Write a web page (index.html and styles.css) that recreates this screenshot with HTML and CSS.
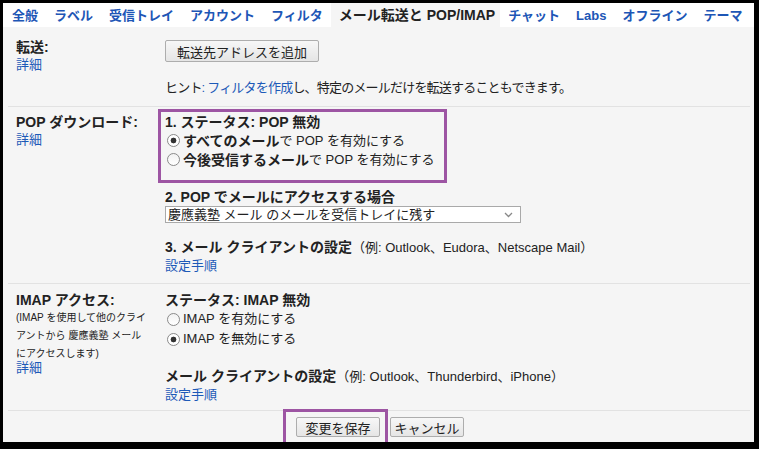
FILE: index.html
```html
<!DOCTYPE html>
<html lang="ja">
<head>
    <meta charset="utf-8">
    <title>設定 - メール転送と POP/IMAP</title>
    <link rel="stylesheet" href="styles.css">
</head>
<body>
<div class="frame">
    <!-- Settings tabs -->
    <div class="tabs">
        <a class="tab" href="#">全般</a>
        <a class="tab" href="#">ラベル</a>
        <a class="tab" href="#">受信トレイ</a>
        <a class="tab" href="#">アカウント</a>
        <a class="tab" href="#">フィルタ</a>
        <span class="tab active">メール転送と POP/IMAP</span>
        <a class="tab" href="#">チャット</a>
        <a class="tab" href="#">Labs</a>
        <a class="tab" href="#">オフライン</a>
        <a class="tab" href="#">テーマ</a>
    </div>

    <!-- Forwarding -->
    <div class="row row-forward">
        <div class="row-label">
            <div class="label">転送:</div>
            <a class="link" href="#">詳細</a>
        </div>
        <div class="row-body">
            <button type="button" class="btn btn-add">転送先アドレスを追加</button>
            <p class="hint">ヒント<span class="link">: </span><a class="link" href="#">フィルタを作成</a>し、特定のメールだけを転送することもできます。</p>
        </div>
    </div>

    <!-- POP download -->
    <div class="row row-pop">
        <div class="row-label">
            <div class="label">POP ダウンロード:</div>
            <a class="link" href="#">詳細</a>
        </div>
        <div class="row-body">
            <div class="mark mark-status">
                <div class="label">1. ステータス: POP 無効</div>
                <label class="option"><input type="radio" name="pop" checked><b>すべてのメール</b>で POP を有効にする</label>
                <label class="option"><input type="radio" name="pop"><b>今後受信するメール</b>で POP を有効にする</label>
            </div>
            <div class="label step">2. POP でメールにアクセスする場合</div>
            <div class="select">
                <span>慶應義塾 メール のメールを受信トレイに残す</span>
                <svg width="9" height="6" viewBox="0 0 9 6"><path d="M1 1l3.5 3.5L8 1" fill="none" stroke="#888" stroke-width="1.3"/></svg>
            </div>
            <div class="step-client"><b>3. メール クライアントの設定</b>（例: Outlook、Eudora、Netscape Mail）</div>
            <a class="link" href="#">設定手順</a>
        </div>
    </div>

    <!-- IMAP access -->
    <div class="row row-imap">
        <div class="row-label">
            <div class="label">IMAP アクセス:</div>
            <div class="note">(IMAP を使用して他のクライ<br>アントから 慶應義塾 メール<br>にアクセスします)</div>
            <a class="link link-tight" href="#">詳細</a>
        </div>
        <div class="row-body">
            <div class="label">ステータス: IMAP 無効</div>
            <label class="option option-wide"><input type="radio" name="imap">IMAP を有効にする</label>
            <label class="option option-wide"><input type="radio" name="imap" checked>IMAP を無効にする</label>
            <div class="step-client step-imap"><b>メール クライアントの設定</b>（例: Outlook、Thunderbird、iPhone）</div>
            <a class="link" href="#">設定手順</a>
        </div>
    </div>

    <!-- Save / cancel -->
    <div class="actions">
        <div class="mark mark-save">
            <button type="button" class="btn btn-save">変更を保存</button>
        </div>
        <button type="button" class="btn btn-cancel">キャンセル</button>
    </div>
</div>
</body>
</html>
```

FILE: styles.css
```css
body {
    margin: 0;
    font-family: "Liberation Sans", "Noto Sans CJK JP", sans-serif;
    font-size: 13px;
    color: #222;
}

.frame {
    width: 759px;
    height: 449px;
    box-sizing: border-box;
    border: solid #000;
    border-width: 3px 5px 7px 3px;
    background-color: #f5f5f5;
    overflow: hidden;
}

/* tab strip */
.tabs {
    display: flex;
    height: 24px;
    padding-left: 1px;
    background-color: #fff;
    font-weight: bold;
}

.tab {
    padding: 0 8px;
    line-height: 25px;
    color: #1d56b6;
    text-decoration: none;
}

.tab.active {
    padding: 0 5px 0 8px;
    background-color: #f5f5f5;
    color: #222;
    font-size: 14px;
}

/* setting rows */
.row {
    display: grid;
    grid-template-columns: 149px 1fr;
    margin: 0 4px 0 5px;
    padding-left: 8px;
    border-bottom: 1px solid #e2e2e2;
    line-height: 18px;
}

.row-label {
    display: flex;
    flex-direction: column;
    align-items: flex-start;
}

.row-body {
    display: flex;
    flex-direction: column;
    align-items: flex-start;
}

.label {
    font-weight: bold;
    font-size: 14px;
}

.link {
    color: #1d5ab8;
    text-decoration: none;
}

.row-forward {
    padding-top: 11px;
    padding-bottom: 9px;
}

.hint {
    margin: 17px 0 0;
    letter-spacing: -0.8px;
}

.row-pop {
    padding-top: 2px;
    padding-bottom: 8px;
}

.row-pop .row-label {
    padding-top: 4px;
}

.row-imap {
    padding-top: 7px;
    padding-bottom: 6px;
}

.note {
    font-size: 10px;
    line-height: 18px;
}

.link-tight {
    margin-top: -4px;
}

/* purple outline around the changed options */
.mark {
    border: 3px solid #9d55a3;
    box-sizing: border-box;
}

.mark-status {
    width: 289px;
    margin-left: -7px;
    padding: 1px 0 11px 4px;
}

.option {
    display: flex;
    align-items: center;
    line-height: 19px;
}

.option-wide {
    line-height: 20px;
}

.option b,
.step-client b {
    font-weight: bold;
    font-size: 14px;
    line-height: 16px;
}

.option input {
    appearance: none;
    width: 13px;
    height: 13px;
    margin: 0 3px 0 2px;
    border: 1px solid #8a8a8a;
    border-radius: 50%;
    background: linear-gradient(#f2f2f2, #fff);
    box-sizing: border-box;
}

.option input:checked {
    background: radial-gradient(circle, #333 0 2.6px, #fff 3.2px);
}

.step {
    margin-top: 5px;
}

.select {
    display: flex;
    align-items: center;
    justify-content: space-between;
    width: 356px;
    height: 17px;
    box-sizing: border-box;
    padding: 0 7px 0 2px;
    border: 1px solid #a9a9a9;
    background-color: #fff;
    line-height: 15px;
}

.step-client {
    margin-top: 16px;
}

.step-imap {
    margin-top: 19px;
}

/* buttons */
.btn {
    height: 22px;
    padding: 0 11px;
    border: 1px solid #adadad;
    border-radius: 2px;
    background: linear-gradient(#f7f7f7, #e5e5e5);
    font-family: inherit;
    font-size: 13px;
    color: #222;
}

.btn-add {
    margin-top: 2px;
}

.actions {
    display: flex;
    justify-content: center;
    align-items: flex-start;
    padding-right: 10px;
}

.mark-save {
    margin-top: -2px;
    padding: 5px 5px 6px 10px;
}

.btn-save {
    width: 84px;
    height: 20px;
    padding: 0;
}

.btn-cancel {
    width: 74px;
    height: 20px;
    margin: 6px 0 0 2px;
    padding: 0;
}
```
